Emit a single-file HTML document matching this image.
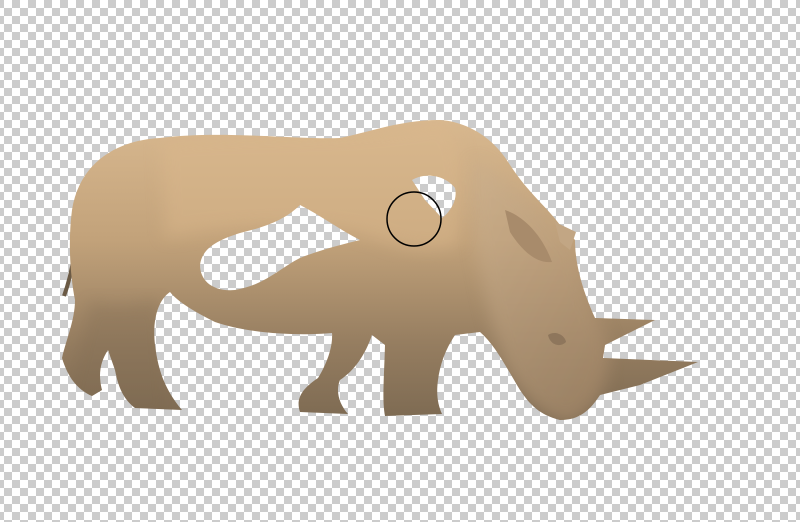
<!DOCTYPE html>
<html><head><meta charset="utf-8"><style>html,body{margin:0;padding:0;width:800px;height:522px;overflow:hidden;background:#fff}</style></head>
<body>
<svg width="800" height="522" viewBox="0 0 800 522" xmlns="http://www.w3.org/2000/svg">
<defs>
<pattern id="ck" width="16" height="16" patternUnits="userSpaceOnUse" x="4" y="0">
<rect width="16" height="16" fill="#fff"/>
<rect x="8" y="0" width="8" height="8" fill="#cccccc"/>
<rect x="0" y="8" width="8" height="8" fill="#cccccc"/>
</pattern>
<linearGradient id="bd" x1="0" y1="0" x2="0" y2="1">
<stop offset="0" stop-color="#d8b88f"/>
<stop offset="0.4" stop-color="#c2a27a"/>
<stop offset="0.75" stop-color="#957d60"/>
<stop offset="1" stop-color="#7d6a52"/>
</linearGradient>
<linearGradient id="hd" x1="0" y1="0" x2="1" y2="1">
<stop offset="0" stop-color="#cbb190"/>
<stop offset="1" stop-color="#a88a6a"/>
</linearGradient>
<filter id="bl"><feGaussianBlur stdDeviation="8"/></filter>
<clipPath id="cl"><path id="sil" d="M72,210 C80,160 120,140 160,138 C220,130 300,140 340,138 C370,132 400,120 440,120 C470,122 495,140 510,165 C530,195 545,205 560,225 L575,240 C575,260 580,285 595,318 L655,320 L605,345 L603,358 L698,362 L640,385 L600,395 C590,410 580,420 560,420 C540,415 530,405 520,390 C505,365 495,345 480,332 L455,335 C445,350 440,365 438,380 C436,395 438,405 442,414 L385,416 C382,400 384,380 385,345 L372,335 C365,355 355,370 340,380 C335,392 340,405 348,414 L300,412 C296,400 300,390 318,378 C328,362 333,345 332,333 C300,336 250,334 215,322 C195,312 178,302 170,292 C158,300 152,320 155,345 C158,370 165,390 182,410 L135,408 C122,398 118,385 115,370 L108,350 C100,362 98,375 102,390 L92,396 C78,390 68,378 62,358 C66,340 75,320 75,300 C70,275 68,240 72,210 Z"/></clipPath>
</defs>
<rect width="800" height="522" fill="url(#ck)"/>
<path d="M75,250 C72,270 68,285 64,296" stroke="#6b5a45" stroke-width="4" fill="none"/>
<use href="#sil" fill="url(#bd)"/>
<g clip-path="url(#cl)">
<path fill="url(#hd)" opacity="0.6" filter="url(#bl)" d="M475,160 C520,190 560,220 578,250 C585,290 600,320 610,345 C610,380 600,410 570,425 C545,420 525,400 510,375 C495,345 485,300 478,260 C472,220 468,180 475,160 Z"/>
<path fill="#dab78c" opacity="0.5" filter="url(#bl)" d="M160,140 C250,130 340,140 440,120 C470,130 465,200 458,245 C430,255 400,248 380,240 C330,222 250,222 165,238 Z"/>
<path fill="#7a6650" opacity="0.3" filter="url(#bl)" d="M90,300 C120,310 140,300 160,300 L170,420 L60,420 Z"/>
</g>
<path fill="#a88b6b" d="M505,210 C520,215 540,230 552,262 C535,264 520,248 510,232 Z"/>
<path fill="#c2a684" d="M555,222 L576,232 L570,250 L560,242 Z"/>
<path fill="#8e765c" d="M548,335 C555,330 565,335 566,342 C560,348 550,345 548,335 Z"/>
<path fill="url(#ck)" d="M300,205 C320,215 340,230 360,240 C340,245 320,250 300,258 C280,268 265,285 235,290 C212,292 200,280 200,265 C202,248 218,240 240,233 C265,227 285,220 300,205 Z"/>
<path fill="url(#ck)" d="M412,180 C425,172 445,175 455,188 C458,200 450,212 442,218 L425,200 Z"/>
<circle cx="414" cy="219" r="27" fill="none" stroke="#000" stroke-width="1.5"/>
</svg>
</body></html>
